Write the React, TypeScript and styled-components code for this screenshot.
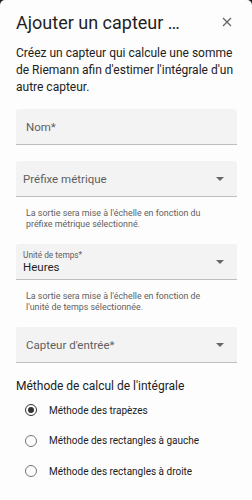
import React from "react";
import styled, { createGlobalStyle } from "styled-components";

const Global = createGlobalStyle`
  html, body { margin: 0; padding: 0; background: #1c1c1c; }
  body { font-family: Roboto, "Noto Sans", sans-serif; -webkit-font-smoothing: antialiased; }
`;

const Dialog = styled.div`
  width: 252px;
  height: 500px;
  background: #fdfdfd;
  border-radius: 5px 5px 0 0;
  overflow: hidden;
  box-sizing: border-box;
  padding: 0 15px 0 16px;
  display: flex;
  flex-direction: column;
`;

const Header = styled.div`
  display: flex;
  align-items: center;
  justify-content: space-between;
  height: 44px;
  flex-shrink: 0;
  padding-top: 1px;
  box-sizing: border-box;
`;

const Title = styled.h2`
  margin: 0;
  font-size: 18px;
  font-weight: 400;
  color: #1f1f1f;
  white-space: nowrap;
`;

const Close = styled.button`
  border: 0;
  background: none;
  padding: 0;
  width: 16px;
  height: 16px;
  display: flex;
  align-items: center;
  justify-content: center;
  margin-right: 2px;
  margin-top: -2px;
`;

const Description = styled.p`
  margin: 1px 0 0;
  font-size: 12px;
  line-height: 17px;
  color: #212121;
`;

const Field = styled.div<{ $top: number }>`
  margin-top: ${(p) => p.$top}px;
  height: 36px;
  flex-shrink: 0;
  background: #f3f3f3;
  border-bottom: 1px solid #bdbdbd;
  border-radius: 3px 3px 0 0;
  display: flex;
  align-items: center;
  justify-content: space-between;
  box-sizing: border-box;
  padding-right: 13px;
`;

const FieldLabel = styled.span<{ $pad: number }>`
  padding-left: ${(p) => p.$pad}px;
  font-size: 11.5px;
  color: #5f5f5f;
`;

const FilledBox = styled.div`
  display: flex;
  flex-direction: column;
  padding-left: 7px;
  padding-top: 2px;
`;

const Floating = styled.span`
  font-size: 8.3px;
  color: #616161;
  line-height: 10px;
`;

const Value = styled.span`
  font-size: 11.5px;
  color: #1f1f1f;
  line-height: 15px;
`;

const Helper = styled.div`
  margin: 11px 0 0;
  padding-left: 10px;
  font-size: 8.9px;
  line-height: 11px;
  color: #616161;
`;

const SectionTitle = styled.div`
  margin-top: 16px;
  font-size: 12px;
  line-height: 14px;
  color: #212121;
`;

const RadioList = styled.div`
  display: flex;
  flex-direction: column;
  margin-top: 11px;
  gap: 18.5px;
`;

const RadioRow = styled.label`
  display: flex;
  align-items: center;
  height: 12px;
  padding-left: 9px;
  gap: 12px;
  font-size: 10px;
  color: #212121;
`;

const RadioCircle = styled.span<{ $on: boolean }>`
  width: 12px;
  height: 12px;
  box-sizing: border-box;
  border-radius: 50%;
  border: 1.5px solid ${(p) => (p.$on ? "#333" : "#757575")};
  display: flex;
  align-items: center;
  justify-content: center;
  &::after {
    content: "";
    width: 6px;
    height: 6px;
    border-radius: 50%;
    background: #333;
    display: ${(p) => (p.$on ? "block" : "none")};
  }
`;

const Arrow = () => (
  <svg width="8" height="4" viewBox="0 0 8 4">
    <path d="M0 0 L8 0 L4 4 Z" fill="#666" />
  </svg>
);

export default function App() {
  return (
    <>
      <Global />
      <Dialog>
        <Header>
          <Title>Ajouter un capteur …</Title>
          <Close aria-label="Fermer">
            <svg width="10" height="10" viewBox="0 0 10 10">
              <path d="M1 1 L9 9 M9 1 L1 9" stroke="#616161" strokeWidth="1.2" />
            </svg>
          </Close>
        </Header>
        <Description>
          Créez un capteur qui calcule une somme de Riemann afin d'estimer l'intégrale d'un autre capteur.
        </Description>
        <Field $top={13}>
          <FieldLabel $pad={10}>Nom*</FieldLabel>
        </Field>
        <Field $top={16}>
          <FieldLabel $pad={7}>Préfixe métrique</FieldLabel>
          <Arrow />
        </Field>
        <Helper>
          La sortie sera mise à l'échelle en fonction du
          <br />
          préfixe métrique sélectionné.
        </Helper>
        <Field $top={14}>
          <FilledBox>
            <Floating>Unité de temps*</Floating>
            <Value>Heures</Value>
          </FilledBox>
          <Arrow />
        </Field>
        <Helper>
          La sortie sera mise à l'échelle en fonction de
          <br />
          l'unité de temps sélectionnée.
        </Helper>
        <Field $top={14}>
          <FieldLabel $pad={10}>Capteur d'entrée*</FieldLabel>
          <Arrow />
        </Field>
        <SectionTitle>Méthode de calcul de l'intégrale</SectionTitle>
        <RadioList>
          <RadioRow>
            <RadioCircle $on={true} />
            Méthode des trapèzes
          </RadioRow>
          <RadioRow>
            <RadioCircle $on={false} />
            Méthode des rectangles à gauche
          </RadioRow>
          <RadioRow>
            <RadioCircle $on={false} />
            Méthode des rectangles à droite
          </RadioRow>
        </RadioList>
      </Dialog>
    </>
  );
}
